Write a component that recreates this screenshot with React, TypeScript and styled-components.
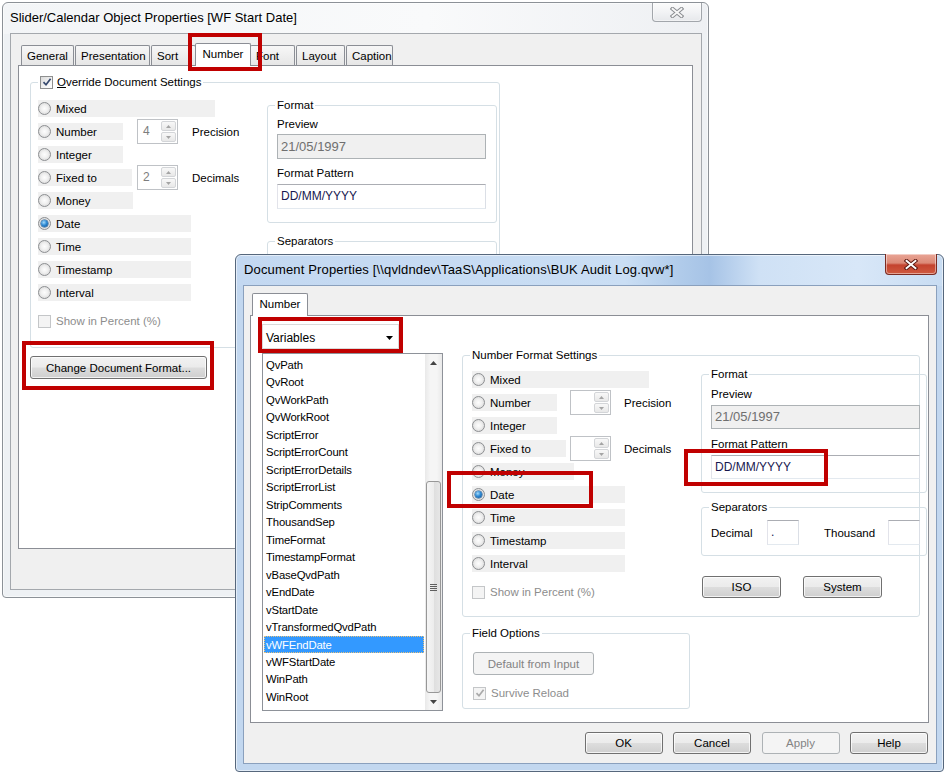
import React from "react";
import styled, { createGlobalStyle, css } from "styled-components";

const GlobalStyle = createGlobalStyle`
  *, *::before, *::after { box-sizing: border-box; }
  html, body { margin: 0; padding: 0; background: #ffffff; }
  body {
    font-family: "Liberation Sans", Arial, sans-serif;
    font-size: 11.5px;
    color: #000;
  }
  fieldset { margin: 0; }
`;

const Desktop = styled.div`
  position: relative;
  width: 952px;
  height: 777px;
  overflow: hidden;
  background: #ffffff;
`;

/* ---------- window chrome ---------- */

const WindowFrame = styled.div<{ $x: number; $y: number; $w: number; $h: number; $active?: boolean }>`
  position: absolute;
  left: ${(p) => p.$x}px;
  top: ${(p) => p.$y}px;
  width: ${(p) => p.$w}px;
  height: ${(p) => p.$h}px;
  display: flex;
  flex-direction: column;
  padding: 0 6px 7px 7px;
  border: 1px solid ${(p) => (p.$active ? "#56677c" : "#8c9197")};
  border-radius: 6px 6px 4px 4px;
  background: ${(p) =>
    p.$active
      ? "linear-gradient(90deg, #c3d8f1 0%, #cadef4 55%, #b0cbea 63%, #a6c3e6 67%, #cfe1f5 74%, #d8e7f8 88%, #c8dcf2 100%) top / 100% 31px no-repeat, #c2d7ef"
      : "linear-gradient(90deg, #f3f5f7 0%, #f9fafb 60%, #eef0f3 100%) top / 100% 31px no-repeat, #eef1f4"};
  box-shadow: inset 0 0 0 1px rgba(255, 255, 255, 0.55);
`;

const TitleBar = styled.div<{ $indent: number }>`
  height: 30px;
  flex: none;
  display: flex;
  justify-content: space-between;
  align-items: flex-start;
  padding-left: ${(p) => p.$indent}px;
`;

const TitleText = styled.span<{ $spacing?: number }>`
  font-size: 13px;
  line-height: 30px;
  letter-spacing: ${(p) => p.$spacing ?? 0}px;
  white-space: nowrap;
  color: #000;
`;

const CloseButton = styled.div<{ $active?: boolean }>`
  flex: none;
  width: ${(p) => (p.$active ? 52 : 50)}px;
  height: ${(p) => (p.$active ? 21 : 19)}px;
  margin-top: ${(p) => (p.$active ? -1 : 0)}px;
  display: flex;
  align-items: center;
  justify-content: center;
  border: 1px solid ${(p) => (p.$active ? "#7b2b22" : "#a2a6ab")};
  border-top: none;
  border-radius: 0 0 4px 4px;
  background: ${(p) =>
    p.$active
      ? "linear-gradient(#e9a596 0%, #dc8a77 45%, #c4432e 55%, #cf5a40 100%)"
      : "linear-gradient(#fbfbfb 0%, #f2f3f5 50%, #e6e8eb 100%)"};
  box-shadow: inset 0 0 0 1px rgba(255, 255, 255, 0.45);
`;

const ClientArea = styled.div<{ $active?: boolean; $pad: string }>`
  flex: 1;
  min-height: 0;
  display: flex;
  flex-direction: column;
  background: #f0f0f0;
  border: 1px solid ${(p) => (p.$active ? "#8aa0bd" : "#a4a8ad")};
  padding: ${(p) => p.$pad};
`;

/* ---------- tabs ---------- */

const TabStrip = styled.div<{ $inset: number }>`
  display: flex;
  align-items: flex-end;
  height: 23px;
  flex: none;
  padding-left: ${(p) => p.$inset}px;
  margin-bottom: -1px;
  position: relative;
  z-index: 1;
`;

const Tab = styled.div<{ $w: number; $selected?: boolean }>`
  flex: none;
  display: flex;
  align-items: center;
  white-space: nowrap;
  border: 1px solid #8b8e95;
  border-bottom: none;
  border-radius: 2px 2px 0 0;
  ${(p) =>
    p.$selected
      ? css`
          width: ${p.$w + 3}px;
          height: 23px;
          margin: 0 -1px 0 -2px;
          padding-bottom: 3px;
          justify-content: center;
          background: #ffffff;
          position: relative;
          z-index: 2;
        `
      : css`
          width: ${p.$w - 1}px;
          height: 20px;
          margin: 0 1px 1px 0;
          padding-left: 5px;
          justify-content: flex-start;
          background: linear-gradient(#f7f7f7, #e6e6e6);
        `}
`;

const TabPanel = styled.div`
  flex: 1;
  min-height: 0;
  background: #ffffff;
  border: 1px solid #8b8e95;
`;

/* ---------- group boxes ---------- */

const GroupBox = styled.fieldset<{ $w: number; $mt?: number }>`
  flex: none;
  width: ${(p) => p.$w}px;
  margin: ${(p) => p.$mt ?? 0}px 0 0 0;
  padding: 0;
  min-width: 0;
  border: 1px solid #d5dfe5;
  border-radius: 3px;
`;

const GroupLegend = styled.legend`
  margin-left: 7px;
  padding: 0 2px;
  height: 14px;
  line-height: 14px;
  white-space: nowrap;
`;

const LegendRow = styled.span`
  display: inline-flex;
  align-items: center;
  gap: 4px;
  height: 14px;
  vertical-align: top;
`;

const GroupBody = styled.div<{ $pad: string; $row?: boolean }>`
  padding: ${(p) => p.$pad};
  display: flex;
  flex-direction: ${(p) => (p.$row ? "row" : "column")};
  align-items: flex-start;
`;

/* ---------- controls ---------- */

const RadioDot = styled.span<{ $checked?: boolean }>`
  position: relative;
  flex: none;
  width: 13px;
  height: 13px;
  border-radius: 50%;
  border: 1px solid #8d8f92;
  background: radial-gradient(circle at 50% 50%, #fdfdfd 0%, #f1f1f1 40%, #d0d0d0 100%);
  ${(p) =>
    p.$checked &&
    css`
      &::after {
        content: "";
        position: absolute;
        left: 2px;
        top: 2px;
        width: 7px;
        height: 7px;
        border-radius: 50%;
        background: radial-gradient(circle at 40% 35%, #a6dcfb 0%, #2f8ad4 45%, #0b4a8a 100%);
        box-shadow: 0 0 0 0.5px #1b4f80;
      }
    `}
`;

const CheckBoxBox = styled.span<{ $disabled?: boolean }>`
  flex: none;
  width: 13px;
  height: 13px;
  display: inline-flex;
  align-items: center;
  justify-content: center;
  border: 1px solid ${(p) => (p.$disabled ? "#c4c6c8" : "#8e8f8f")};
  background: ${(p) =>
    p.$disabled ? "#f4f4f4" : "linear-gradient(135deg, #d9d9d9 0%, #f4f4f4 60%, #ffffff 100%)"};
`;

function CheckBox({ checked, disabled }: { checked?: boolean; disabled?: boolean }) {
  return (
    <CheckBoxBox $disabled={disabled}>
      {checked && (
        <svg width="10" height="10" viewBox="0 0 10 10">
          <path
            d="M1.5 5.2 L4 7.8 L8.6 1.8"
            fill="none"
            stroke={disabled ? "#a9a9a9" : "#36496e"}
            strokeWidth="1.7"
          />
        </svg>
      )}
    </CheckBoxBox>
  );
}

const OptionStack = styled.div<{ $pt: number }>`
  flex: none;
  width: 229px;
  display: flex;
  flex-direction: column;
  gap: 6px;
  padding-top: ${(p) => p.$pt}px;
`;

const OptionRow = styled.div<{ $spinAt: number }>`
  display: grid;
  grid-template-columns: ${(p) => p.$spinAt}px 41px auto;
  grid-template-rows: 17px;
  align-items: center;
  height: 17px;
`;

const OptionChip = styled.div<{ $w: number }>`
  width: ${(p) => p.$w}px;
  height: 17px;
  background: #f0f0f0;
  display: flex;
  align-items: center;
  gap: 5px;
  white-space: nowrap;
`;

const SpinBox = styled.div`
  width: 41px;
  height: 25px;
  display: flex;
  border: 1px solid #bfc2c6;
  background: #ffffff;
`;

const SpinValue = styled.span`
  flex: 1;
  padding-left: 5px;
  line-height: 23px;
  color: #7d7d7d;
  font-size: 12px;
`;

const SpinButtons = styled.div`
  width: 16px;
  display: flex;
  flex-direction: column;
  gap: 1px;
  padding: 1px 1px 1px 0;
`;

const SpinArrow = styled.div`
  flex: 1;
  border: 1px solid #d3d5d8;
  border-radius: 2px;
  background: linear-gradient(#f8f8f8, #e8e8e8);
  display: flex;
  align-items: center;
  justify-content: center;
`;

const SpinCaption = styled.span<{ $pl: number }>`
  padding-left: ${(p) => p.$pl}px;
  white-space: nowrap;
`;

const CheckRow = styled.div<{ $disabled?: boolean; $mt?: number }>`
  display: flex;
  align-items: center;
  gap: 5px;
  height: 14px;
  margin-top: ${(p) => p.$mt ?? 0}px;
  white-space: nowrap;
  color: ${(p) => (p.$disabled ? "#8d8d8d" : "#000")};
`;

const FieldLabel = styled.div<{ $mt?: number }>`
  height: 14px;
  line-height: 14px;
  margin-top: ${(p) => p.$mt ?? 0}px;
  white-space: nowrap;
`;

const ReadOnlyField = styled.div<{ $mt: number; $h: number }>`
  width: 209px;
  height: ${(p) => p.$h}px;
  margin-top: ${(p) => p.$mt}px;
  border: 1px solid #adb2b5;
  background: #f0f0f0;
  color: #6f6f6f;
  font-size: 13px;
  line-height: ${(p) => p.$h - 2}px;
  padding-left: 3px;
`;

const EditField = styled.div<{ $mt?: number; $h: number; $w?: number }>`
  width: ${(p) => p.$w ?? 209}px;
  height: ${(p) => p.$h}px;
  margin-top: ${(p) => p.$mt ?? 0}px;
  border: 1px solid #abadb3;
  border-color: #abadb3 #dbdfe6 #e3e9ef #e2e3ea;
  background: #ffffff;
  color: #17174f;
  font-size: 12px;
  line-height: ${(p) => p.$h - 2}px;
  padding-left: 3px;
`;

const SepRow = styled.div`
  display: grid;
  grid-template-columns: 56px 32px 89px 32px;
  align-items: center;
  height: 25px;
`;

const SepCaption = styled.span<{ $pl?: number }>`
  padding-left: ${(p) => p.$pl ?? 0}px;
  white-space: nowrap;
`;

const PushButton = styled.button<{ $w: number; $h?: number; $mt?: number; $disabled?: boolean }>`
  flex: none;
  width: ${(p) => p.$w}px;
  height: ${(p) => p.$h ?? 22}px;
  margin: ${(p) => p.$mt ?? 0}px 0 0 0;
  padding: 0;
  font: inherit;
  display: flex;
  align-items: center;
  justify-content: center;
  white-space: nowrap;
  border-radius: 3px;
  ${(p) =>
    p.$disabled
      ? css`
          border: 1px solid #adb2b5;
          background: #f4f4f4;
          color: #838383;
        `
      : css`
          border: 1px solid #707070;
          background: linear-gradient(#f2f2f2 0%, #ebebeb 49%, #dddddd 51%, #cfcfcf 100%);
          box-shadow: inset 0 0 0 1px rgba(255, 255, 255, 0.75);
          color: #000;
        `}
`;

const ButtonRow = styled.div<{ $gap: number; $mt: number; $pl?: number; $pr?: number; $end?: boolean }>`
  display: flex;
  justify-content: ${(p) => (p.$end ? "flex-end" : "flex-start")};
  gap: ${(p) => p.$gap}px;
  margin-top: ${(p) => p.$mt}px;
  padding-left: ${(p) => p.$pl ?? 0}px;
  padding-right: ${(p) => p.$pr ?? 0}px;
  flex: none;
`;

/* ---------- list + dropdown ---------- */

const LeftColumn = styled.div`
  flex: none;
  width: 181px;
  display: flex;
  flex-direction: column;
`;

const DropDown = styled.div`
  width: 137px;
  height: 25px;
  margin-bottom: 4px;
  border: 1px solid #dadada;
  background: #ffffff;
  display: flex;
  align-items: center;
  justify-content: space-between;
  padding: 2px 5px 0 3px;
  font-size: 12px;
`;

const ListBox = styled.div`
  width: 181px;
  height: 358px;
  border: 1px solid #8e9299;
  background: #ffffff;
  display: flex;
`;

const ListItems = styled.div`
  flex: 1;
  padding: 2px 1px 0 1px;
  overflow: hidden;
`;

const ListItem = styled.div<{ $selected?: boolean }>`
  height: 17.47px;
  line-height: 18.5px;
  padding-left: 2px;
  font-size: 11.3px;
  letter-spacing: -0.15px;
  white-space: nowrap;
  ${(p) =>
    p.$selected &&
    css`
      background: #3399ff;
      color: #ffffff;
      outline: 1px dotted #e9c27c;
      outline-offset: -1px;
    `}
`;

const ScrollTrack = styled.div`
  width: 17px;
  flex: none;
  display: flex;
  flex-direction: column;
  background: linear-gradient(90deg, #e9e9e9 0%, #f5f5f5 30%, #f5f5f5 70%, #e9e9e9 100%);
`;

const ScrollButton = styled.div`
  height: 17px;
  flex: none;
  display: flex;
  align-items: center;
  justify-content: center;
`;

const ScrollRail = styled.div<{ $offset: number }>`
  flex: 1;
  display: flex;
  flex-direction: column;
  padding-top: ${(p) => p.$offset}px;
`;

const ScrollThumb = styled.div`
  flex: 1;
  margin: 0 1px;
  border: 1px solid #979797;
  border-radius: 3px;
  background: linear-gradient(90deg, #f5f5f5 0%, #ededed 50%, #dedede 51%, #e6e6e6 100%);
  display: flex;
  align-items: center;
  justify-content: center;
`;

const Grip = styled.div`
  width: 7px;
  height: 7px;
  background: repeating-linear-gradient(#5f5f5f 0 1px, transparent 1px 2px);
`;

/* ---------- layout blocks ---------- */

const SliderBody = styled.div`
  padding: 9px 0 0 11px;
  display: flex;
  flex-direction: column;
  align-items: flex-start;
`;

const DocBody = styled.div`
  padding: 8px 0 0 11px;
  display: flex;
  align-items: flex-start;
`;

const RightColumn = styled.div`
  flex: none;
  margin: 24px 0 0 19px;
  display: flex;
  flex-direction: column;
  align-items: flex-start;
`;

const FormatColumn = styled.div`
  flex: none;
  display: flex;
  flex-direction: column;
  align-items: flex-start;
`;

const Highlight = styled.div<{ $x: number; $y: number; $w: number; $h: number }>`
  position: absolute;
  left: ${(p) => p.$x}px;
  top: ${(p) => p.$y}px;
  width: ${(p) => p.$w}px;
  height: ${(p) => p.$h}px;
  border: 4px solid #c00000;
  pointer-events: none;
  z-index: 10;
`;

/* ---------- composed pieces ---------- */

function CloseGlyph({ active }: { active?: boolean }) {
  const d = "M2.5 1.8 L11.5 9.2 M11.5 1.8 L2.5 9.2";
  return (
    <svg width="14" height="11" viewBox="0 0 14 11">
      <path d={d} stroke={active ? "#5e1a12" : "#8a8d91"} strokeWidth="3.8" strokeLinecap="square" />
      <path d={d} stroke={active ? "#ffffff" : "#f7f7f7"} strokeWidth="1.8" strokeLinecap="square" />
    </svg>
  );
}

function Arrow({ up, color = "#000", w = 7, h = 4 }: { up?: boolean; color?: string; w?: number; h?: number }) {
  return (
    <svg width={w} height={h} viewBox={`0 0 ${w} ${h}`}>
      <path d={up ? `M0 ${h} L${w / 2} 0 L${w} ${h} Z` : `M0 0 L${w} 0 L${w / 2} ${h} Z`} fill={color} />
    </svg>
  );
}

function Window(props: {
  x: number;
  y: number;
  w: number;
  h: number;
  title: string;
  active?: boolean;
  indent: number;
  spacing?: number;
  children: React.ReactNode;
}) {
  return (
    <WindowFrame $x={props.x} $y={props.y} $w={props.w} $h={props.h} $active={props.active}>
      <TitleBar $indent={props.indent}>
        <TitleText $spacing={props.spacing}>{props.title}</TitleText>
        <CloseButton $active={props.active}>
          <CloseGlyph active={props.active} />
        </CloseButton>
      </TitleBar>
      {props.children}
    </WindowFrame>
  );
}

function Spinner({ value }: { value?: string }) {
  return (
    <SpinBox>
      <SpinValue>{value}</SpinValue>
      <SpinButtons>
        <SpinArrow>
          <Arrow up color="#a4a4a4" w={5} h={3} />
        </SpinArrow>
        <SpinArrow>
          <Arrow color="#a4a4a4" w={5} h={3} />
        </SpinArrow>
      </SpinButtons>
    </SpinBox>
  );
}

type OptionSpec = { label: string; w: number; checked?: boolean; spin?: { value?: string; caption: string } };

function NumberOptions(props: { pt: number; spinAt: number; captionPad: number; options: OptionSpec[] }) {
  return (
    <OptionStack $pt={props.pt}>
      {props.options.map((o) => (
        <OptionRow key={o.label} $spinAt={props.spinAt}>
          <OptionChip $w={o.w}>
            <RadioDot $checked={o.checked} />
            <span>{o.label}</span>
          </OptionChip>
          {o.spin && <Spinner value={o.spin.value} />}
          {o.spin && <SpinCaption $pl={props.captionPad}>{o.spin.caption}</SpinCaption>}
        </OptionRow>
      ))}
      <CheckRow $disabled $mt={7}>
        <CheckBox disabled />
        <span>Show in Percent (%)</span>
      </CheckRow>
    </OptionStack>
  );
}

function FormatGroup(props: { w: number; pt: number; g1: number; g2: number; g3: number; fieldH: number }) {
  return (
    <GroupBox $w={props.w}>
      <GroupLegend>Format</GroupLegend>
      <GroupBody $pad={`${props.pt}px 0 13px 9px`}>
        <FieldLabel>Preview</FieldLabel>
        <ReadOnlyField $mt={props.g1} $h={props.fieldH}>
          21/05/1997
        </ReadOnlyField>
        <FieldLabel $mt={props.g2}>Format Pattern</FieldLabel>
        <EditField $mt={props.g3} $h={props.fieldH}>
          DD/MM/YYYY
        </EditField>
      </GroupBody>
    </GroupBox>
  );
}

/* the captions of the first window's separators are hidden behind the second window */
function SeparatorsGroup(props: { w: number; mt: number; captions?: boolean }) {
  return (
    <GroupBox $w={props.w} $mt={props.mt}>
      <GroupLegend>Separators</GroupLegend>
      <GroupBody $pad="6px 0 10px 9px">
        <SepRow>
          <SepCaption>{props.captions ? "Decimal" : ""}</SepCaption>
          <EditField $h={25} $w={32}>
            {props.captions ? "." : ""}
          </EditField>
          <SepCaption $pl={25}>{props.captions ? "Thousand" : ""}</SepCaption>
          <EditField $h={25} $w={32} />
        </SepRow>
      </GroupBody>
    </GroupBox>
  );
}

const W1_OPTIONS: OptionSpec[] = [
  { label: "Mixed", w: 177 },
  { label: "Number", w: 85, spin: { value: "4", caption: "Precision" } },
  { label: "Integer", w: 85 },
  { label: "Fixed to", w: 94, spin: { value: "2", caption: "Decimals" } },
  { label: "Money", w: 95 },
  { label: "Date", w: 153, checked: true },
  { label: "Time", w: 153 },
  { label: "Timestamp", w: 153 },
  { label: "Interval", w: 153 },
];

const W2_OPTIONS: OptionSpec[] = [
  { label: "Mixed", w: 177 },
  { label: "Number", w: 85, spin: { caption: "Precision" } },
  { label: "Integer", w: 85 },
  { label: "Fixed to", w: 94, spin: { caption: "Decimals" } },
  { label: "Money", w: 102 },
  { label: "Date", w: 153, checked: true },
  { label: "Time", w: 153 },
  { label: "Timestamp", w: 153 },
  { label: "Interval", w: 153 },
];

const TABS = [
  { label: "General", w: 54 },
  { label: "Presentation", w: 76 },
  { label: "Sort", w: 46 },
  { label: "Number", w: 53, selected: true },
  { label: "Font", w: 46 },
  { label: "Layout", w: 50 },
  { label: "Caption", w: 48 },
];

const VARIABLES = [
  "QvPath",
  "QvRoot",
  "QvWorkPath",
  "QvWorkRoot",
  "ScriptError",
  "ScriptErrorCount",
  "ScriptErrorDetails",
  "ScriptErrorList",
  "StripComments",
  "ThousandSep",
  "TimeFormat",
  "TimestampFormat",
  "vBaseQvdPath",
  "vEndDate",
  "vStartDate",
  "vTransformedQvdPath",
  "vWFEndDate",
  "vWFStartDate",
  "WinPath",
  "WinRoot",
];

export default function App() {
  return (
    <>
      <GlobalStyle />
      <Desktop>
        <Window x={2} y={2} w={707} h={596} indent={0} title="Slider/Calendar Object Properties [WF Start Date]">
          <ClientArea $pad="9px 8px 40px 7px">
            <TabStrip $inset={3}>
              {TABS.map((t) => (
                <Tab key={t.label} $w={t.w} $selected={t.selected}>
                  {t.label}
                </Tab>
              ))}
            </TabStrip>
            <TabPanel>
              <SliderBody>
                <GroupBox $w={470}>
                  <GroupLegend>
                    <LegendRow>
                      <CheckBox checked />
                      <span>
                        <u>O</u>verride Document Settings
                      </span>
                    </LegendRow>
                  </GroupLegend>
                  <GroupBody $row $pad="9px 0 19px 7px">
                    <NumberOptions pt={2} spinAt={99} captionPad={14} options={W1_OPTIONS} />
                    <FormatColumn>
                      <FormatGroup w={230} pt={5} g1={3} g2={7} g3={4} fieldH={25} />
                      <SeparatorsGroup w={230} mt={11} />
                    </FormatColumn>
                  </GroupBody>
                </GroupBox>
                <PushButton $w={177} $h={23} $mt={8}>
                  Change Document Format...
                </PushButton>
              </SliderBody>
            </TabPanel>
          </ClientArea>
        </Window>

        <Window
          x={235}
          y={254}
          w={709}
          h={518}
          active
          indent={1}
          spacing={0.15}
          title={"Document Properties [\\\\qvldndev\\TaaS\\Applications\\BUK Audit Log.qvw*]"}
        >
          <ClientArea $active $pad="7px 7px 9px 6px">
            <TabStrip $inset={4}>
              <Tab $w={53} $selected>
                Number
              </Tab>
            </TabStrip>
            <TabPanel>
              <DocBody>
                <LeftColumn>
                  <DropDown>
                    <span>Variables</span>
                    <Arrow />
                  </DropDown>
                  <ListBox>
                    <ListItems>
                      {VARIABLES.map((v) => (
                        <ListItem key={v} $selected={v === "vWFEndDate"}>
                          {v}
                        </ListItem>
                      ))}
                    </ListItems>
                    <ScrollTrack>
                      <ScrollButton>
                        <Arrow up color="#444" />
                      </ScrollButton>
                      <ScrollRail $offset={110}>
                        <ScrollThumb>
                          <Grip />
                        </ScrollThumb>
                      </ScrollRail>
                      <ScrollButton>
                        <Arrow color="#444" />
                      </ScrollButton>
                    </ScrollTrack>
                  </ListBox>
                </LeftColumn>

                <RightColumn>
                  <GroupBox $w={458}>
                    <GroupLegend>Number Format Settings</GroupLegend>
                    <GroupBody $row $pad="5px 0 17px 9px">
                      <NumberOptions pt={4} spinAt={98} captionPad={13} options={W2_OPTIONS} />
                      <FormatColumn>
                        <FormatGroup w={226} pt={6} g1={4} g2={8} g3={4} fieldH={24} />
                        <SeparatorsGroup w={226} mt={7} captions />
                        <ButtonRow $gap={22} $mt={20} $pl={1}>
                          <PushButton $w={79}>ISO</PushButton>
                          <PushButton $w={79}>System</PushButton>
                        </ButtonRow>
                      </FormatColumn>
                    </GroupBody>
                  </GroupBox>

                  <GroupBox $w={228} $mt={9}>
                    <GroupLegend>Field Options</GroupLegend>
                    <GroupBody $pad="12px 0 8px 10px">
                      <PushButton $w={121} $h={23} $disabled>
                        Default from Input
                      </PushButton>
                      <CheckRow $disabled $mt={11}>
                        <CheckBox checked disabled />
                        <span>Survive Reload</span>
                      </CheckRow>
                    </GroupBody>
                  </GroupBox>
                </RightColumn>
              </DocBody>
            </TabPanel>
            <ButtonRow $gap={10.5} $mt={9} $pr={1} $end>
              <PushButton $w={78}>OK</PushButton>
              <PushButton $w={78}>Cancel</PushButton>
              <PushButton $w={78} $disabled>
                Apply
              </PushButton>
              <PushButton $w={78}>Help</PushButton>
            </ButtonRow>
          </ClientArea>
        </Window>

        <Highlight $x={188} $y={33} $w={74} $h={38} />
        <Highlight $x={22} $y={341} $w={192} $h={49} />
        <Highlight $x={258} $y={317} $w={145} $h={36} />
        <Highlight $x={447} $y={471} $w={146} $h={37} />
        <Highlight $x={684} $y={449} $w={144} $h={37} />
      </Desktop>
    </>
  );
}
